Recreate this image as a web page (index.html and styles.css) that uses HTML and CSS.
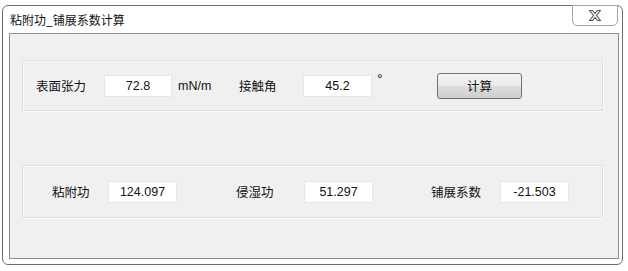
FILE: index.html
```html
<!DOCTYPE html>
<html lang="zh-CN">
<head>
  <meta charset="UTF-8">
  <title>粘附功_铺展系数计算</title>
  <link rel="stylesheet" href="styles.css">
</head>
<body>
  <div class="window">
    <div class="titlebar">
      <span class="title">粘附功_铺展系数计算</span>
      <button class="close" title="关闭">
        <svg width="14" height="11" viewBox="0 0 14 11">
          <path d="M1.5 0.5h3l2.5 3 2.5-3h3l-4 5 4 5h-3l-2.5-3-2.5 3h-3l4-5z" fill="#f4f4f4" stroke="#555" stroke-width="1.1" stroke-linejoin="round"/>
        </svg>
      </button>
    </div>
    <div class="client">
      <div class="group group-input">
        <span class="label lbl-tension">表面张力</span>
        <div class="field f-tension">72.8</div>
        <span class="unit">mN/m</span>
        <span class="label lbl-angle">接触角</span>
        <div class="field f-angle">45.2</div>
        <span class="degree">°</span>
        <button class="calc">计算</button>
      </div>
      <div class="group group-output">
        <span class="label lbl-adh">粘附功</span>
        <div class="field">124.097</div>
        <span class="label lbl-wet">侵湿功</span>
        <div class="field">51.297</div>
        <span class="label lbl-spread">铺展系数</span>
        <div class="field">-21.503</div>
      </div>
    </div>
  </div>
</body>
</html>
```

FILE: styles.css
```css
body {
  margin: 0;
  background: #fff;
  font-family: "Noto Sans CJK SC", "Liberation Sans", sans-serif;
  font-size: 12px;
  color: #111;
}
.window {
  margin: 5px 0 0 2px;
  width: 619px;
  height: 258px;
  border: 1px solid #6e6e6e;
  border-radius: 6px;
  background: #fff;
  display: flex;
  flex-direction: column;
}
.titlebar {
  height: 27px;
  display: flex;
  align-items: flex-start;
  padding-left: 7px;
  padding-right: 4px;
}
.title {
  line-height: 27px;
  font-size: 12px;
}
.close {
  margin-left: auto;
  margin-top: -1px;
  width: 46px;
  height: 21px;
  padding: 0;
  border: 1px solid #a5a5a5;
  border-radius: 0 0 5px 5px;
  background: #fff;
  display: flex;
  align-items: center;
  justify-content: center;
}
.client {
  margin: 0 3px 5px 6px;
  border: 1px solid #8e8e8e;
  background: #f0f0f0;
  padding: 26px 0 0 12px;
  box-sizing: border-box;
  height: 226px;
}
.group {
  width: 581px;
  box-sizing: border-box;
  border: 1px solid #dedede;
  box-shadow: inset 1px 1px 0 #fafafa, 1px 1px 0 #fbfbfb;
  display: flex;
  align-items: center;
}
.group-input {
  height: 51px;
  padding-left: 13px;
}
.group-output {
  height: 53px;
  margin-top: 54px;
  padding-left: 29px;
}
.label {
  font-size: 12.5px;
}
.field {
  width: 69px;
  height: 22px;
  box-sizing: border-box;
  background: #fff;
  border: 1px solid #e6e6e6;
  text-align: center;
  line-height: 20px;
  font-family: "Liberation Sans", sans-serif;
  font-size: 12.5px;
}
.lbl-tension { width: 68px; }
.f-tension { width: 68px; }
.unit {
  margin-left: 6px;
  width: 61px;
  font-family: "Liberation Sans", sans-serif;
  font-size: 12.5px;
}
.lbl-angle { width: 64px; }
.degree {
  align-self: flex-start;
  margin-top: 10px;
  margin-left: 5px;
  width: 60px;
  font-family: "Liberation Sans", sans-serif;
  font-size: 14px;
}
.calc {
  width: 85px;
  height: 26px;
  padding: 0;
  border: 1px solid #707070;
  border-radius: 3px;
  background: linear-gradient(#f3f3f3 0%, #ebebeb 50%, #dddddd 50%, #cfcfcf 100%);
  font-family: "Noto Sans CJK SC", sans-serif;
  font-size: 12.5px;
  color: #111;
}
.lbl-adh { width: 56px; }
.lbl-wet { margin-left: 59px; width: 68px; }
.lbl-spread { margin-left: 58px; width: 69px; }
```
